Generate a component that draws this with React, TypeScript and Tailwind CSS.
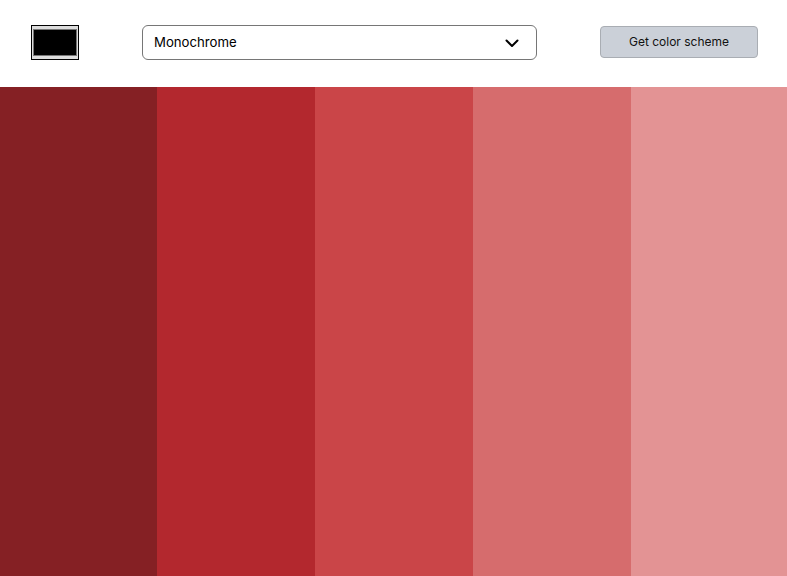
const colors = ["#852024", "#b3282e", "#ca4548", "#d66c6d", "#e39394"];

export default function App() {
  return (
    <div className="flex h-screen flex-col bg-white font-['Inter',sans-serif] text-black">
      <header className="flex h-[87px] shrink-0 items-start gap-[63px] pl-[31px] pt-[25px]">
        <div className="flex h-[35px] w-[48px] items-stretch border border-black bg-[#dddddd] px-px py-[3px]">
          <div className="flex-1 border border-[#777777] bg-black" />
        </div>
        <div className="relative w-[395px]">
          <select
            defaultValue="monochrome"
            className="h-[35px] w-full appearance-none rounded-md border border-[#767676] bg-white pl-[11px] text-[13.2px] text-black outline-none"
          >
            <option value="monochrome">Monochrome</option>
            <option value="monochrome-dark">Monochrome-dark</option>
            <option value="monochrome-light">Monochrome-light</option>
            <option value="analogic">Analogic</option>
            <option value="complement">Complement</option>
            <option value="analogic-complement">Analogic-complement</option>
            <option value="triad">Triad</option>
          </select>
          <svg
            className="pointer-events-none absolute right-[17px] top-1/2 h-4 w-4 -translate-y-1/2"
            viewBox="0 0 16 16"
            fill="none"
            stroke="black"
            strokeWidth="2"
            strokeLinecap="round"
            strokeLinejoin="round"
          >
            <path d="M2.5 5.5 8 11l5.5-5.5" />
          </svg>
        </div>
        <button className="mt-px h-[32px] w-[158px] rounded-[4px] border border-[#a9adb3] bg-[#cbd0d8] text-[12px] text-[#111]">
          Get color scheme
        </button>
      </header>
      <main className="grid flex-1 grid-cols-[157px_158px_158px_158px_1fr]">
        {colors.map((c) => (
          <div key={c} style={{ backgroundColor: c }} />
        ))}
      </main>
    </div>
  );
}
